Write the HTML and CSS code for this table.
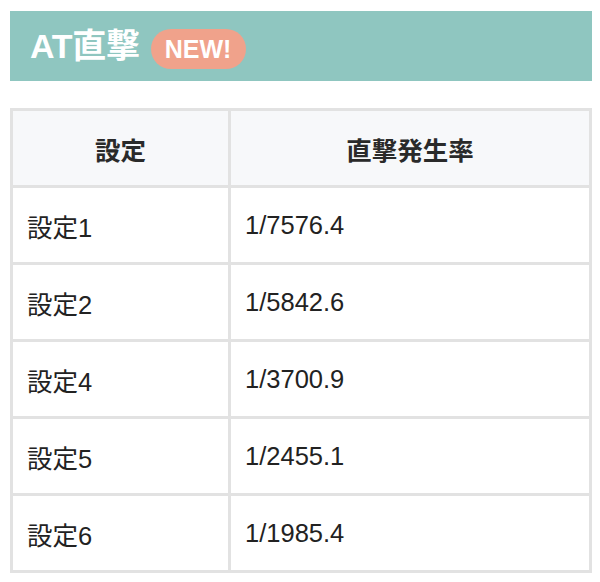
FILE: index.html
```html
<!DOCTYPE html>
<html lang="ja">
<head>
<meta charset="utf-8">
<link rel="stylesheet" href="styles.css">
</head>
<body>
<div class="page">
  <h2 class="title-bar">
    <span class="title-text">AT直撃</span>
    <span class="badge">NEW!</span>
  </h2>
  <table class="rate-table">
    <colgroup><col class="col-setting"><col class="col-rate"></colgroup>
    <thead>
      <tr><th>設定</th><th>直撃発生率</th></tr>
    </thead>
    <tbody>
      <tr><td>設定1</td><td>1/7576.4</td></tr>
      <tr><td>設定2</td><td>1/5842.6</td></tr>
      <tr><td>設定4</td><td>1/3700.9</td></tr>
      <tr><td>設定5</td><td>1/2455.1</td></tr>
      <tr><td>設定6</td><td>1/1985.4</td></tr>
    </tbody>
  </table>
</div>
</body>
</html>
```

FILE: styles.css
```css
* { box-sizing: border-box; }
html, body { margin: 0; padding: 0; background: #fff; }
body {
  font-family: "Liberation Sans", "Noto Sans CJK JP", sans-serif;
  color: #222;
}
.page {
  width: 582px;
  margin: 11px 0 0 10px;
}
.title-bar {
  margin: 0;
  height: 70px;
  background: #8fc6c0;
  display: flex;
  align-items: center;
  padding: 0 0 0 20px;
}
.title-text {
  color: #fff;
  font-size: 34px;
  font-weight: bold;
  letter-spacing: -0.3px;
  line-height: 1;
}
.badge {
  margin-left: 11px;
  margin-top: 6px;
  width: 95px;
  height: 40px;
  border-radius: 20px;
  background: #f0a28b;
  color: #fff;
  font-size: 25px;
  font-weight: bold;
  display: flex;
  align-items: center;
  justify-content: center;
  line-height: 1;
}
.rate-table {
  margin-top: 27px;
  width: 582px;
  border-collapse: collapse;
  table-layout: fixed;
  border: 3px solid #e2e2e2;
}
.col-setting { width: 218px; }
.rate-table th,
.rate-table td {
  border: 3px solid #e2e2e2;
  height: 77px;
  font-size: 25.5px;
  vertical-align: middle;
  padding: 0 14px;
}
.rate-table th {
  background: #f7f8fa;
  font-weight: bold;
  text-align: center;
  color: #2a2a2a;
}
.rate-table td {
  font-weight: normal;
  text-align: left;
  color: #222;
}
```
